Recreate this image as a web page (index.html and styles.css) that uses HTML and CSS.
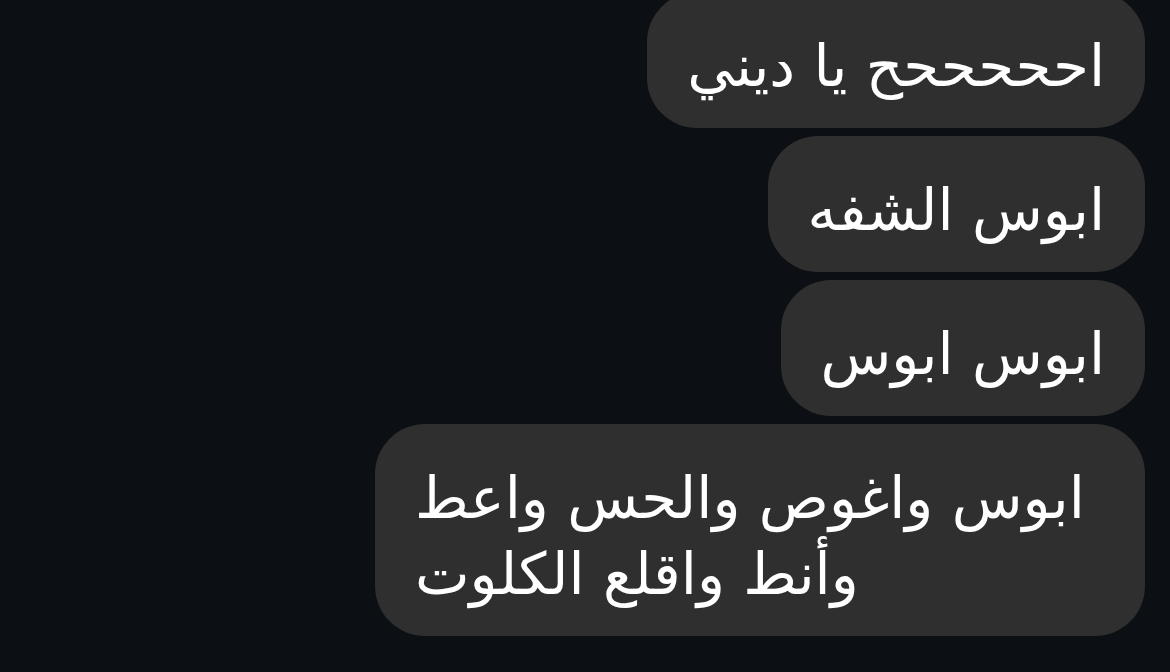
FILE: index.html
```html
<!DOCTYPE html>
<html lang="ar" dir="rtl">
<head>
  <meta charset="UTF-8" />
  <title>محادثة</title>
  <link rel="stylesheet" href="styles.css">
</head>
<body>
  <div class="chat">
    <div class="bubble">احححححح يا ديني</div>
    <div class="bubble">ابوس الشفه</div>
    <div class="bubble">ابوس ابوس</div>
    <div class="bubble">ابوس واغوص والحس واعط وأنط واقلع الكلوت</div>
  </div>
</body>
</html>
```

FILE: styles.css
```css
body {
  margin: 0;
  background-color: #0c1014;
  font-family: "DejaVu Sans", "Noto Sans", sans-serif;
  height: 100vh;
  overflow: hidden;
}

.chat {
  display: flex;
  flex-direction: column;
  align-items: flex-start;
  gap: 8px;
  padding-right: 25px;
  margin-top: -8px;
}

.bubble {
  background-color: #2f2f2f;
  color: #ffffff;
  font-size: 58px;
  line-height: 76px;
  padding: 36px 40px 24px;
  border-radius: 50px;
  max-width: 690px;
  text-align: left;
}
```
